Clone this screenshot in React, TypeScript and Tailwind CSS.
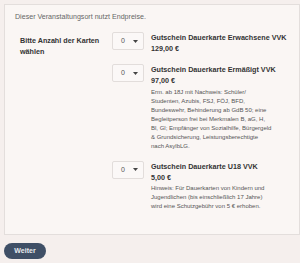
const ITEMS = [
  {
    title: 'Gutschein Dauerkarte Erwachsene VVK',
    price: '129,00 €',
    desc: [] as string[],
  },
  {
    title: 'Gutschein Dauerkarte Ermäßigt VVK',
    price: '97,00 €',
    desc: [
      'Erm. ab 18J mit Nachweis: Schüler/',
      'Studenten, Azubis, FSJ, FÖJ, BFD,',
      'Bundeswehr, Behinderung ab GdB 50; eine',
      'Begleitperson frei bei Merkmalen B, aG, H,',
      'Bl, Gl; Empfänger von Sozialhilfe, Bürgergeld',
      '& Grundsicherung, Leistungsberechtigte',
      'nach AsylbLG.',
    ],
  },
  {
    title: 'Gutschein Dauerkarte U18 VVK',
    price: '5,00 €',
    desc: [
      'Hinweis: Für Dauerkarten von Kindern und',
      'Jugendlichen (bis einschließlich 17 Jahre)',
      'wird eine Schutzgebühr von 5 € erhoben.',
    ],
  },
];

function QtySelect() {
  return (
    <div className="flex items-center justify-between w-[32px] h-[18px] shrink-0 rounded-[2px] border border-[#e2dddb] bg-[#fbf8f7] pl-[8px] pr-[5px] text-[7px] leading-[10px] text-[#555]">
      <span>0</span>
      <svg width="5" height="3" viewBox="0 0 5 3"><path d="M0 0h5L2.5 3z" fill="#444" /></svg>
    </div>
  );
}

export default function App() {
  return (
    <div className="min-h-[263px] w-[300px] bg-[#f5efed] pt-[4px] pl-[4px] font-['Liberation_Sans',Arial,sans-serif] overflow-hidden">
      <div className="w-[296px] h-[231px] border border-[#e3dedc] bg-[#faf6f4] pt-[7px] pl-[10px]">
        <p className="text-[7.1px] leading-[10px] text-[#666]">Dieser Veranstaltungsort nutzt Endpreise.</p>

        <div className="mt-[10px] flex items-start">
          <div className="w-[97px] shrink-0 pl-[5px] pt-[3px] text-[7.2px] leading-[11px] font-bold text-[#333]">
            Bitte Anzahl der Karten<br />wählen
          </div>
          <div className="flex-1 min-w-0">
            {ITEMS.map(it => (
              <div key={it.title} className="flex items-start gap-[7px] mt-[10px] first:mt-0">
                <QtySelect />
                <div className="flex-1 min-w-0 text-[#333]">
                  <p className="text-[7.2px] leading-[11px] font-bold whitespace-nowrap">{it.title}</p>
                  <p className="text-[7.2px] leading-[11px] font-bold">{it.price}</p>
                  {it.desc.length > 0 && (
                    <div className="mt-[1.5px] text-[6px] leading-[9px] text-[#555]">
                      {it.desc.map(d => <p key={d} className="h-[9px] whitespace-nowrap">{d}</p>)}
                    </div>
                  )}
                </div>
              </div>
            ))}
          </div>
        </div>
      </div>
      <button className="mt-[8px] h-[16px] w-[42px] rounded-full bg-[#3f4f66] text-[7px] font-semibold text-[#e8ebef]">Weiter</button>
    </div>
  );
}
